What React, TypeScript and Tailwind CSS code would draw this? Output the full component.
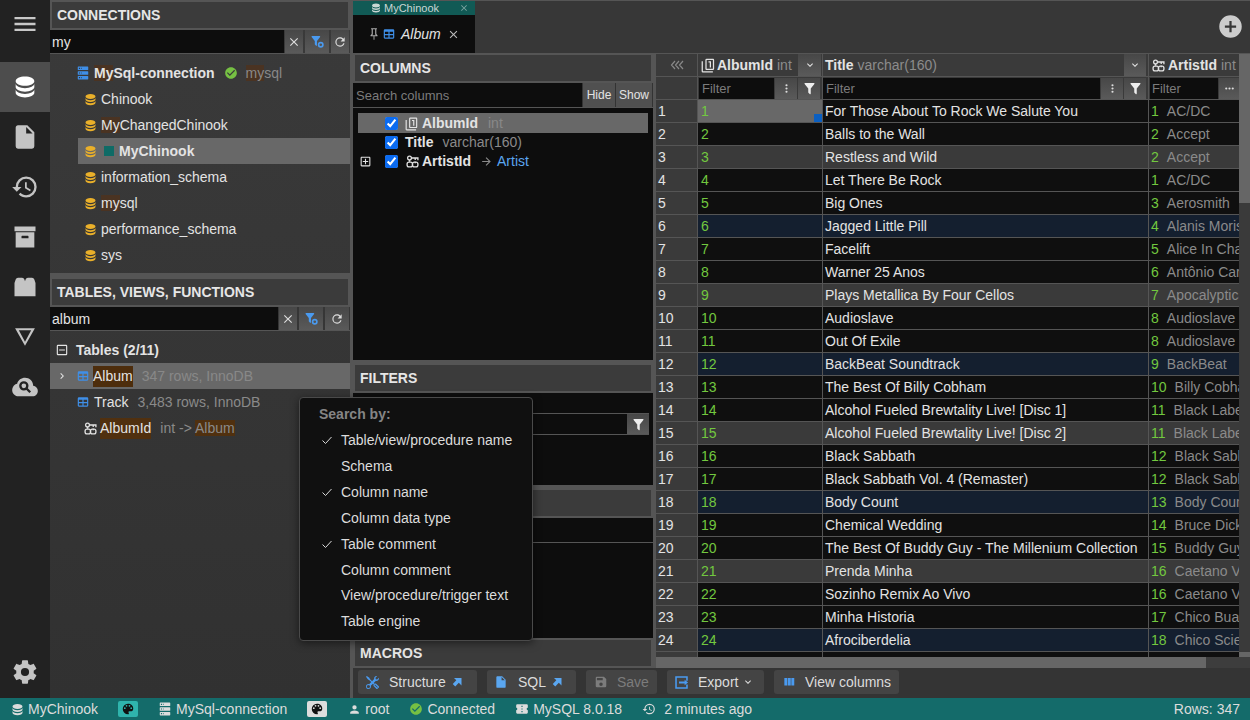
import React from 'react';
import { BsTools } from 'react-icons/bs';

const P = {
  menu: 'M3,6H21V8H3V6M3,11H21V13H3V11M3,16H21V18H3V16Z',
  database: 'M12,3C7.58,3 4,4.79 4,7C4,9.21 7.58,11 12,11C16.42,11 20,9.21 20,7C20,4.79 16.42,3 12,3M4,9V12C4,14.21 7.58,16 12,16C16.42,16 20,14.21 20,12V9C20,11.21 16.42,13 12,13C7.58,13 4,11.21 4,9M4,14V17C4,19.21 7.58,21 12,21C16.42,21 20,19.21 20,17V14C20,16.21 16.42,18 12,18C7.58,18 4,16.21 4,14Z',
  file: 'M13,9V3.5L18.5,9M6,2C4.89,2 4,2.89 4,4V20A2,2 0 0,0 6,22H18A2,2 0 0,0 20,20V8L14,2H6Z',
  history: 'M13.5,8H12V13L16.28,15.54L17,14.33L13.5,12.25V8M13,3A9,9 0 0,0 4,12H1L4.96,16.03L9,12H6A7,7 0 0,1 13,5A7,7 0 0,1 20,12A7,7 0 0,1 13,19C11.07,19 9.32,18.21 8.06,16.94L6.64,18.36C8.27,20 10.5,21 13,21A9,9 0 0,0 22,12A9,9 0 0,0 13,3',
  archive: 'M3,3H21V7H3V3M4,8H20V21H4V8M9.5,11A0.5,0.5 0 0,0 9,11.5V13H15V11.5A0.5,0.5 0 0,0 14.5,11H9.5Z',
  brick: 'M3,8.5L4,5.5Q4.5,4 6,4H9.5Q11,4 11.5,5.5L12,7L12.5,5.5Q13,4 14.5,4H18Q19.5,4 20,5.5L21,8.5V20H3Z',
  cog: 'M12,15.5A3.5,3.5 0 0,1 8.5,12A3.5,3.5 0 0,1 12,8.5A3.5,3.5 0 0,1 15.5,12A3.5,3.5 0 0,1 12,15.5M19.43,12.97C19.47,12.65 19.5,12.33 19.5,12C19.5,11.67 19.47,11.34 19.43,11L21.54,9.37C21.73,9.22 21.78,8.95 21.66,8.73L19.66,5.27C19.54,5.05 19.27,4.96 19.05,5.05L16.56,6.05C16.04,5.66 15.5,5.32 14.87,5.07L14.5,2.42C14.46,2.18 14.25,2 14,2H10C9.75,2 9.54,2.18 9.5,2.42L9.13,5.07C8.5,5.32 7.96,5.66 7.44,6.05L4.95,5.05C4.73,4.96 4.46,5.05 4.34,5.27L2.34,8.73C2.21,8.95 2.27,9.22 2.46,9.37L4.57,11C4.53,11.34 4.5,11.67 4.5,12C4.5,12.33 4.53,12.65 4.57,12.97L2.46,14.63C2.27,14.78 2.21,15.05 2.34,15.27L4.34,18.73C4.46,18.95 4.73,19.03 4.95,18.95L7.44,17.94C7.96,18.34 8.5,18.68 9.13,18.93L9.5,21.58C9.54,21.82 9.75,22 10,22H14C14.25,22 14.46,21.82 14.5,21.58L14.87,18.93C15.5,18.67 16.04,18.34 16.56,17.94L19.05,18.95C19.27,19.03 19.54,18.95 19.66,18.73L21.66,15.27C21.78,15.05 21.73,14.78 21.54,14.63L19.43,12.97Z',
  server: 'M4,1H20A1,1 0 0,1 21,2V6A1,1 0 0,1 20,7H4A1,1 0 0,1 3,6V2A1,1 0 0,1 4,1M4,9H20A1,1 0 0,1 21,10V14A1,1 0 0,1 20,15H4A1,1 0 0,1 3,14V10A1,1 0 0,1 4,9M4,17H20A1,1 0 0,1 21,18V22A1,1 0 0,1 20,23H4A1,1 0 0,1 3,22V18A1,1 0 0,1 4,17M9,5H10V3H9V5M9,13H10V11H9V13M9,21H10V19H9V21M5,3V5H7V3H5M5,11V13H7V11H5M5,19V21H7V19H5Z',
  table: 'M5,4H19A2,2 0 0,1 21,6V18A2,2 0 0,1 19,20H5A2,2 0 0,1 3,18V6A2,2 0 0,1 5,4M5,8V12H11V8H5M13,8V12H19V8H13M5,14V18H11V14H5M13,14V18H19V14H13Z',
  checkCircle: 'M12 2C6.5 2 2 6.5 2 12S6.5 22 12 22 22 17.5 22 12 17.5 2 12 2M10 17L5 12L6.41 10.59L10 14.17L17.59 6.58L19 8L10 17Z',
  filter: 'M14,12V19.88C14.04,20.18 13.94,20.5 13.71,20.71C13.32,21.1 12.69,21.1 12.3,20.71L10.29,18.7C10.06,18.47 9.96,18.16 10,17.87V12H9.97L4.21,4.62C3.87,4.19 3.95,3.56 4.38,3.22C4.57,3.08 4.78,3 5,3V3H19V3C19.22,3 19.43,3.08 19.62,3.22C20.05,3.56 20.13,4.19 19.79,4.62L14.03,12H14Z',
  close: 'M19,6.41L17.59,5L12,10.59L6.41,5L5,6.41L10.59,12L5,17.59L6.41,19L12,13.41L17.59,19L19,17.59L13.41,12L19,6.41Z',
  refresh: 'M17.65,6.35C16.2,4.9 14.21,4 12,4A8,8 0 0,0 4,12A8,8 0 0,0 12,20C15.73,20 18.84,17.45 19.73,14H17.65C16.83,16.33 14.61,18 12,18A6,6 0 0,1 6,12A6,6 0 0,1 12,6C13.66,6 15.14,6.69 16.22,7.78L13,11H20V4L17.65,6.35Z',
  chevronRight: 'M8.59,16.58L13.17,12L8.59,7.41L10,6L16,12L10,18L8.59,16.58Z',
  chevronDown: 'M7.41,8.58L12,13.17L16.59,8.58L18,10L12,16L6,10L7.41,8.58Z',
  dotsV: 'M12,16A2,2 0 0,1 14,18A2,2 0 0,1 12,20A2,2 0 0,1 10,18A2,2 0 0,1 12,16M12,10A2,2 0 0,1 14,12A2,2 0 0,1 12,14A2,2 0 0,1 10,12A2,2 0 0,1 12,10M12,4A2,2 0 0,1 14,6A2,2 0 0,1 12,8A2,2 0 0,1 10,6A2,2 0 0,1 12,4Z',
  dotsH: 'M16,12A2,2 0 0,1 18,10A2,2 0 0,1 20,12A2,2 0 0,1 18,14A2,2 0 0,1 16,12M10,12A2,2 0 0,1 12,10A2,2 0 0,1 14,12A2,2 0 0,1 12,14A2,2 0 0,1 10,12M4,12A2,2 0 0,1 6,10A2,2 0 0,1 8,12A2,2 0 0,1 6,14A2,2 0 0,1 4,12Z',
  minusBox: 'M19,19V5H5V19H19M19,3A2,2 0 0,1 21,5V19A2,2 0 0,1 19,21H5A2,2 0 0,1 3,19V5A2,2 0 0,1 5,3H19M17,11V13H7V11H17Z',
  plusBox: 'M19,19V5H5V19H19M19,3A2,2 0 0,1 21,5V19A2,2 0 0,1 19,21H5C3.89,21 3,20.1 3,19V5C3,3.89 3.89,3 5,3H19M11,7H13V11H17V13H13V17H11V13H7V11H11V7Z',
  pin: 'M16,12V4H17V2H7V4H8V12L6,14V16H11.2V22H12.8V16H18V14L16,12M8.8,14L10,12.8V4H14V12.8L15.2,14H8.8Z',
  primary: 'M14,15H16V5H12V7H14M19,17H9V3H19M19,1H9A2,2 0 0,0 7,3V17C7,18.11 7.9,19 9,19H19A2,2 0 0,0 21,17V3C21,1.89 20.1,1 19,1M3,5H1V21A2,2 0 0,0 3,23H19V21H3V5Z',
  arrowRight: 'M4,11V13H16L10.5,18.5L11.92,19.92L19.84,12L11.92,4.08L10.5,5.5L16,11H4Z',
  arrowUpRight: 'M6,4H21V19L15.6,13.6L8.5,21L3.5,16L10.6,8.6Z',
  save: 'M15,9H5V5H15M12,19A3,3 0 0,1 9,16A3,3 0 0,1 12,13A3,3 0 0,1 15,16A3,3 0 0,1 12,19M17,3H5C3.89,3 3,3.9 3,5V19A2,2 0 0,0 5,21H19A2,2 0 0,0 21,19V7L17,3Z',
  exportBox: 'M2,2H22V9H19.5V4.5H4.5V19.5H19.5V15H22V22H2ZM8,10.5H17V7.5L22.5,12L17,16.5V13.5H8Z',
  viewColumn: 'M16,5V18H21V5M4,18H9V5H4M10,18H15V5H10V18Z',
  palette: 'M17.5,12A1.5,1.5 0 0,1 16,10.5A1.5,1.5 0 0,1 17.5,9A1.5,1.5 0 0,1 19,10.5A1.5,1.5 0 0,1 17.5,12M14.5,8A1.5,1.5 0 0,1 13,6.5A1.5,1.5 0 0,1 14.5,5A1.5,1.5 0 0,1 16,6.5A1.5,1.5 0 0,1 14.5,8M9.5,8A1.5,1.5 0 0,1 8,6.5A1.5,1.5 0 0,1 9.5,5A1.5,1.5 0 0,1 11,6.5A1.5,1.5 0 0,1 9.5,8M6.5,12A1.5,1.5 0 0,1 5,10.5A1.5,1.5 0 0,1 6.5,9A1.5,1.5 0 0,1 8,10.5A1.5,1.5 0 0,1 6.5,12M12,3A9,9 0 0,0 3,12A9,9 0 0,0 12,21A1.5,1.5 0 0,0 13.5,19.5C13.5,19.11 13.35,18.76 13.11,18.5C12.88,18.23 12.73,17.88 12.73,17.5A1.5,1.5 0 0,1 14.23,16H16A5,5 0 0,0 21,11C21,6.58 16.97,3 12,3Z',
  account: 'M12,4A4,4 0 0,1 16,8A4,4 0 0,1 12,12A4,4 0 0,1 8,8A4,4 0 0,1 12,4M12,14C16.42,14 20,15.79 20,18V20H4V18C4,15.79 7.58,14 12,14Z',
  ticket: 'M13,8.5H11V6.5H13V8.5M13,13H11V11H13V13M13,17.5H11V15.5H13V17.5M22,10V6C22,4.89 21.1,4 20,4H4A2,2 0 0,0 2,6V10C3.11,10 4,10.9 4,12A2,2 0 0,1 2,14V18A2,2 0 0,0 4,20H20A2,2 0 0,0 22,18V14A2,2 0 0,1 20,12A2,2 0 0,1 22,10Z',
  plusCircle: 'M17,13H13V17H11V13H7V11H11V7H13V11H17M12,2A10,10 0 0,0 2,12A10,10 0 0,0 12,22A10,10 0 0,0 22,12A10,10 0 0,0 12,2Z',
  cloud: 'M6.5,20C4.98,20 3.68,19.48 2.61,18.43C1.54,17.38 1,16.1 1,14.58C1,13.28 1.39,12.12 2.17,11.1C2.95,10.08 3.98,9.43 5.25,9.15C5.67,7.62 6.5,6.38 7.75,5.43C9,4.48 10.42,4 12,4C13.95,4 15.6,4.68 16.96,6.04C18.32,7.4 19,9.05 19,11C20.15,11.13 21.1,11.63 21.86,12.5C22.62,13.35 23,14.35 23,15.5C23,16.75 22.56,17.81 21.69,18.69C20.81,19.56 19.75,20 18.5,20Z',
  triangle: 'M12,19.5L3.5,4.5H20.5ZM12,16L17.3,6.2H6.7Z',
};

function Mdi({ d, className }: { d: string; className?: string }) {
  return (
    <svg viewBox="0 0 24 24" fill="currentColor" className={'shrink-0 ' + (className ?? '')}>
      <path d={d} fillRule="evenodd" />
    </svg>
  );
}

// key on top, chain link underneath
function KeyLink({ className }: { className?: string }) {
  return (
    <svg viewBox="0 0 24 24" fill="none" stroke="currentColor" strokeWidth="2.4" className={'shrink-0 ' + (className ?? '')}>
      <circle cx="6.5" cy="5.5" r="3.5" />
      <path d="M10 5.5H22V9.5M17 5.5V9" />
      <path d="M6.5 9V12.5M17 12.5V15" />
      <rect x="2" y="13" width="10" height="9" rx="3.5" />
      <rect x="12" y="13" width="10" height="9" rx="3.5" />
    </svg>
  );
}

function FilterCog({ className }: { className?: string }) {
  return (
    <svg viewBox="0 0 24 24" className={'shrink-0 ' + (className ?? '')}>
      <path d={P.filter} fill="currentColor" transform="translate(-3 -1)" />
      <circle cx="18" cy="18" r="4" fill="none" stroke="currentColor" strokeWidth="3" />
    </svg>
  );
}

function PanelHeader({ children }: { children?: React.ReactNode }) {
  return (
    <div className="h-[30px] shrink-0 border-2 border-[#555] bg-[#3b3b3b] flex items-center pl-[5px] text-[14px] font-bold text-[#e6e6e6]">
      {children}
    </div>
  );
}

function IconBtn({ w, children, ml }: { w: string; ml?: string; children: React.ReactNode }) {
  return (
    <div className={`${w} ${ml ?? ''} h-full shrink-0 flex items-center justify-center bg-linear-to-b from-[#474747] to-[#5a5a5a] text-[#ddd]`}>
      {children}
    </div>
  );
}

function Hl({ children, dim }: { children: React.ReactNode; dim?: boolean }) {
  return <span className={dim ? 'bg-[#4a3322]' : 'bg-[#50300f]'}>{children}</span>;
}

function DbRow({ children, selected }: { children: React.ReactNode; selected?: boolean }) {
  return (
    <div className={`h-[26px] ml-[28px] pl-[5px] flex items-center ${selected ? 'bg-[#686868]' : ''}`}>
      <Mdi d={P.database} className="w-[15px] h-[15px] text-[#eab02a] mr-[3px]" />
      {children}
    </div>
  );
}

function SideIcon({ d, active }: { d: string; active?: boolean }) {
  return (
    <div className={`h-[50px] flex items-center justify-center ${active ? 'bg-[#4d4d4d] text-white' : 'text-[#c4c4c4]'}`}>
      <Mdi d={d} className="w-[28px] h-[28px]" />
    </div>
  );
}

function ToolBtn({ children, dim, ml, w }: { children: React.ReactNode; dim?: boolean; ml: string; w: string }) {
  return (
    <div className={`${ml} ${w} h-[24px] shrink-0 rounded-[3px] bg-[#444] flex items-center ${dim ? 'text-[#7c7c7c]' : 'text-[#dcdcdc]'}`}>
      {children}
    </div>
  );
}

const titles = [
  'For Those About To Rock We Salute You', 'Balls to the Wall', 'Restless and Wild', 'Let There Be Rock', 'Big Ones',
  'Jagged Little Pill', 'Facelift', 'Warner 25 Anos', 'Plays Metallica By Four Cellos', 'Audioslave', 'Out Of Exile',
  'BackBeat Soundtrack', 'The Best Of Billy Cobham', 'Alcohol Fueled Brewtality Live! [Disc 1]',
  'Alcohol Fueled Brewtality Live! [Disc 2]', 'Black Sabbath', 'Black Sabbath Vol. 4 (Remaster)', 'Body Count',
  'Chemical Wedding', 'The Best Of Buddy Guy - The Millenium Collection', 'Prenda Minha', 'Sozinho Remix Ao Vivo',
  'Minha Historia', 'Afrociberdelia',
];

const artists: [number, string][] = [
  [1, 'AC/DC'], [2, 'Accept'], [2, 'Accept'], [1, 'AC/DC'], [3, 'Aerosmith'], [4, 'Alanis Morissette'],
  [5, 'Alice In Chains'], [6, 'Antônio Carlos Jobim'], [7, 'Apocalyptica'], [8, 'Audioslave'], [8, 'Audioslave'],
  [9, 'BackBeat'], [10, 'Billy Cobham'], [11, 'Black Label Society'], [11, 'Black Label Society'], [12, 'Black Sabbath'],
  [12, 'Black Sabbath'], [13, 'Body Count'], [14, 'Bruce Dickinson'], [15, 'Buddy Guy'], [16, 'Caetano Veloso'],
  [16, 'Caetano Veloso'], [17, 'Chico Buarque'], [18, 'Chico Science & Nação Zumbi'],
];

function rowBg(n: number) {
  if (n % 6 === 3) return 'bg-[#3a3a3a]';
  if (n % 6 === 0) return 'bg-[#141f2f]';
  return 'bg-[#0f0f0f]';
}

const searchBy: [string, boolean, string][] = [
  ['Table/view/procedure name', true, 'h-[26px]'], ['Schema', false, 'h-[26px]'], ['Column name', true, 'h-[26px]'],
  ['Column data type', false, 'h-[26px]'], ['Table comment', true, 'h-[26px]'], ['Column comment', false, 'h-[26px]'],
  ['View/procedure/trigger text', false, 'h-[25px]'], ['Table engine', false, 'h-[26px]'],
];

function LeftPanel() {
  return (
    <div className="w-[300px] shrink-0 flex flex-col bg-linear-to-b from-[#3a3a3a] to-[#313131] text-[#e3e3e3]">
      <PanelHeader>CONNECTIONS</PanelHeader>
      <div className="h-[24px] shrink-0 flex items-stretch gap-[1px] pr-[1px] border-b border-[#555]">
        <div className="w-[234px] bg-[#0d0d0d] pl-[2px] pt-[2px] flex items-center">my</div>
        <IconBtn w="w-[18px]"><Mdi d={P.close} className="w-[14px] h-[14px]" /></IconBtn>
        <IconBtn w="w-[24px]" ml="ml-[1px]"><FilterCog className="w-[13px] h-[13px] text-[#4a9aef]" /></IconBtn>
        <IconBtn w="w-[18px]" ml="ml-[1px]"><Mdi d={P.refresh} className="w-[14px] h-[14px]" /></IconBtn>
      </div>
      <div className="h-[219px] shrink-0 pt-[6px]">
        <div className="h-[26px] pl-[26px] flex items-center">
          <Mdi d={P.server} className="w-[14px] h-[14px] text-[#3f8fe8] mr-[4px]" />
          <span className="font-bold"><Hl dim>My</Hl>Sql-connection</span>
          <Mdi d={P.checkCircle} className="w-[14px] h-[14px] text-[#76c043] ml-[9px]" />
          <span className="ml-[8px] text-[#888]"><Hl dim>my</Hl>sql</span>
        </div>
        <DbRow>Chinook</DbRow>
        <DbRow><span><Hl dim>My</Hl>ChangedChinook</span></DbRow>
        <DbRow selected>
          <span className="w-[10px] h-[10px] bg-[#0f6b66] mr-[5px] ml-[3px]" />
          <span className="font-bold">MyChinook</span>
        </DbRow>
        <DbRow>information_schema</DbRow>
        <DbRow><span><Hl dim>my</Hl>sql</span></DbRow>
        <DbRow>performance_schema</DbRow>
        <DbRow>sys</DbRow>
      </div>
      <div className="h-[4px] shrink-0 bg-[#555]" />
      <PanelHeader>TABLES, VIEWS, FUNCTIONS</PanelHeader>
      <div className="h-[24px] shrink-0 flex items-stretch gap-[1px] pr-[1px] border-b border-[#555]">
        <div className="w-[228px] bg-[#0d0d0d] pl-[2px] pt-[2px] flex items-center">album</div>
        <IconBtn w="w-[18px]"><Mdi d={P.close} className="w-[14px] h-[14px]" /></IconBtn>
        <IconBtn w="w-[24px]" ml="ml-[1px]"><FilterCog className="w-[13px] h-[13px] text-[#4a9aef]" /></IconBtn>
        <IconBtn w="w-[24px]" ml="ml-[1px]"><Mdi d={P.refresh} className="w-[14px] h-[14px]" /></IconBtn>
      </div>
      <div className="pt-[6px]">
        <div className="h-[26px] pl-[5px] flex items-center font-bold">
          <Mdi d={P.minusBox} className="w-[14px] h-[14px] mr-[7px]" />
          Tables (2/11)
        </div>
        <div className="h-[26px] pl-[6px] flex items-center bg-[#686868]">
          <Mdi d={P.chevronRight} className="w-[12px] h-[12px] mr-[8px]" />
          <Mdi d={P.table} className="w-[14px] h-[14px] text-[#3f8fe8] mr-[3px]" />
          <span className="bg-[#4d2d0c]">Album</span>
          <span className="ml-[9px] text-[#888]">347 rows, InnoDB</span>
        </div>
        <div className="h-[26px] pl-[26px] flex items-center">
          <Mdi d={P.table} className="w-[14px] h-[14px] text-[#3f8fe8] mr-[4px]" />
          Track
          <span className="ml-[9px] text-[#8a8a8a]">3,483 rows, InnoDB</span>
        </div>
        <div className="h-[26px] pl-[34px] flex items-center">
          <KeyLink className="w-[13px] h-[13px] mr-[3px]" />
          <Hl>AlbumId</Hl>
          <span className="ml-[9px] text-[#8a8a8a]">int -&gt; <Hl>Album</Hl></span>
        </div>
      </div>
    </div>
  );
}

function MiddlePanel() {
  return (
    <div className="w-[300px] shrink-0 flex flex-col bg-[#555] text-[#e3e3e3]">
      <PanelHeader>COLUMNS</PanelHeader>
      <div className="h-[24px] shrink-0 flex gap-[1px] pr-[1px] bg-[#333]">
        <div className="w-[229px] bg-[#0d0d0d] pl-[3px] pt-[1px] flex items-center text-[13px] text-[#7c7c7c]">Search columns</div>
        <div className="w-[32px] bg-[#505050] flex items-center justify-center text-[12px]">Hide</div>
        <div className="w-[36px] bg-[#505050] flex items-center justify-center text-[12px]">Show</div>
      </div>
      <div className="h-[252px] shrink-0 mt-[1px] bg-[#0d0d0d] pt-[5px] pl-[5px] pr-[5px]">
        <div className="h-[20px] pt-[1px] bg-[#686868] flex items-center pl-[27px]">
          <input type="checkbox" readOnly checked className="w-[13px] h-[13px] accent-[#0b6bf0] mr-[7px]" />
          <Mdi d={P.primary} className="w-[14px] h-[14px] mr-[3px]" />
          <span className="font-bold">AlbumId</span>
          <span className="ml-[10px] text-[#888]">int</span>
        </div>
        <div className="h-[19px] flex items-center pl-[27px]">
          <input type="checkbox" readOnly checked className="w-[13px] h-[13px] accent-[#0b6bf0] mr-[7px]" />
          <span className="font-bold">Title</span>
          <span className="ml-[9px] text-[#8a8a8a]">varchar(160)</span>
        </div>
        <div className="h-[19px] flex items-center pl-[1px]">
          <Mdi d={P.plusBox} className="w-[13px] h-[13px] mr-[13px]" />
          <input type="checkbox" readOnly checked className="w-[13px] h-[13px] accent-[#0b6bf0] mr-[8px]" />
          <KeyLink className="w-[13px] h-[13px] mr-[3px]" />
          <span className="font-bold">ArtistId</span>
          <Mdi d={P.arrowRight} className="w-[13px] h-[13px] ml-[9px] mr-[4px] text-[#8a8a8a]" />
          <span className="text-[#5aa6f0]">Artist</span>
        </div>
      </div>
      <div className="h-[3px] shrink-0" />
      <PanelHeader>FILTERS</PanelHeader>
      <div className="h-[92px] shrink-0 bg-[#0d0d0d] pt-[20px] pl-[2px] pr-[4px]">
        <div className="h-[22px] flex border-t border-b border-[#555]">
          <div className="flex-1" />
          <IconBtn w="w-[22px]"><Mdi d={P.filter} className="w-[15px] h-[15px] text-[#eee]" /></IconBtn>
        </div>
      </div>
      <div className="h-[3px] shrink-0" />
      <PanelHeader />
      <div className="h-[120px] shrink-0 bg-[#0d0d0d]">
        <div className="h-[25px] border-b border-[#555]" />
      </div>
      <PanelHeader>MACROS</PanelHeader>
    </div>
  );
}

function Grid() {
  return (
    <div className="w-[594px] shrink-0 flex flex-col bg-[#3a3a3a] text-[#e3e3e3] border-t border-[#555]">
      <div className="h-[603px] flex overflow-hidden">
        <div className="w-[583px] shrink-0">
          <div className="grid grid-cols-[42px_125px_326px_90px] h-[23px] border-b border-[#555]">
            <div className="border-r border-[#555] flex items-center justify-center text-[#888]">
              <svg viewBox="0 0 14 12" className="w-[14px] h-[12px]" fill="none" stroke="currentColor" strokeWidth="1.2">
                <path d="M5 2L1.5 6L5 10M9 2L5.5 6L9 10M13 2L9.5 6L13 10" />
              </svg>
            </div>
            <div className="border-r border-[#555] flex items-center pl-[3px]">
              <Mdi d={P.primary} className="w-[15px] h-[15px] mr-[1px]" />
              <span className="font-bold">AlbumId</span>
              <span className="ml-[4px] text-[#8c8c8c]">int</span>
              <div className="ml-auto mr-[1px] h-[22px] w-[23px] flex items-center justify-center bg-linear-to-b from-[#474747] to-[#5a5a5a]">
                <Mdi d={P.chevronDown} className="w-[12px] h-[12px]" />
              </div>
            </div>
            <div className="border-r border-[#555] flex items-center pl-[2px]">
              <span className="font-bold">Title</span>
              <span className="ml-[4px] text-[#8c8c8c]">varchar(160)</span>
              <div className="ml-auto mr-[2px] h-[22px] w-[22px] flex items-center justify-center bg-linear-to-b from-[#474747] to-[#5a5a5a]">
                <Mdi d={P.chevronDown} className="w-[12px] h-[12px]" />
              </div>
            </div>
            <div className="flex items-center pl-[3px] whitespace-nowrap overflow-hidden">
              <KeyLink className="w-[13px] h-[13px] mr-[3px]" />
              <span className="font-bold">ArtistId</span>
              <span className="ml-[4px] text-[#8c8c8c]">int</span>
            </div>
          </div>
          <div className="grid grid-cols-[42px_125px_326px_90px] h-[23px] border-b border-[#555]">
            <div className="border-r border-[#555]" />
            <div className="border-r border-[#555] flex items-stretch pl-[1px] py-[1px] pr-[1px] gap-[1px]">
              <div className="w-[75px] bg-[#0d0d0d] pl-[3px] pt-[1px] flex items-center text-[13px] text-[#7c7c7c]">Filter</div>
              <IconBtn w="w-[22px]"><Mdi d={P.dotsV} className="w-[13px] h-[13px]" /></IconBtn>
              <IconBtn w="w-[22px]"><Mdi d={P.filter} className="w-[15px] h-[15px] text-[#eee]" /></IconBtn>
            </div>
            <div className="border-r border-[#555] flex items-stretch py-[1px] pr-[1px] gap-[1px]">
              <div className="w-[277px] bg-[#0d0d0d] pl-[3px] pt-[1px] flex items-center text-[13px] text-[#7c7c7c]">Filter</div>
              <IconBtn w="w-[22px]"><Mdi d={P.dotsV} className="w-[13px] h-[13px]" /></IconBtn>
              <IconBtn w="w-[22px]"><Mdi d={P.filter} className="w-[15px] h-[15px] text-[#eee]" /></IconBtn>
            </div>
            <div className="flex items-stretch py-[1px] pl-[1px] gap-[1px]">
              <div className="w-[68px] bg-[#0d0d0d] pl-[2px] pt-[1px] flex items-center text-[13px] text-[#7c7c7c]">Filter</div>
              <IconBtn w="w-[20px]"><Mdi d={P.dotsH} className="w-[13px] h-[13px]" /></IconBtn>
            </div>
          </div>
          {titles.map((title, i) => {
            const n = i + 1;
            const [aid, aname] = artists[i];
            return (
              <div key={n} className={`grid grid-cols-[42px_125px_326px_90px] h-[23px] border-b border-[#555] ${rowBg(n)}`}>
                <div className="bg-[#3a3a3a] border-r border-[#555] pl-[2px] flex items-center">{n}</div>
                <div className={`relative border-r border-[#555] pl-[3px] flex items-center text-[#72c83f] ${n === 1 ? 'bg-[#686868]' : ''}`}>
                  {n}
                  {n === 1 && <span className="absolute right-0 bottom-0 w-[8px] h-[8px] bg-[#0b5fc0]" />}
                </div>
                <div className="border-r border-[#555] pl-[2px] flex items-center whitespace-nowrap overflow-hidden">{title}</div>
                <div className="pl-[2px] flex items-center whitespace-nowrap overflow-hidden">
                  <span className="text-[#72c83f] mr-[8px]">{aid}</span>
                  <span className="text-[#8a8a8a]">{aname}</span>
                </div>
              </div>
            );
          })}
          <div className="grid grid-cols-[42px_125px_326px_90px] h-[23px] bg-[#0f0f0f]">
            <div className="bg-[#3a3a3a] border-r border-[#555]" />
            <div className="border-r border-[#555]" />
            <div className="border-r border-[#555]" />
            <div />
          </div>
        </div>
        <div className="w-[11px] shrink-0 flex flex-col bg-[#3a3a3a]">
          <div className="h-[149px] bg-[#666]" />
          <div className="flex-1" />
          <div className="h-[5px] bg-[#666]" />
        </div>
      </div>
      <div className="h-[11px] shrink-0 bg-[#3d3d3d]">
        <div className="w-[550px] h-full bg-[#666]" />
      </div>
    </div>
  );
}

export default function App() {
  return (
    <div className="relative w-[1250px] h-[720px] overflow-hidden flex flex-col bg-[#343434] text-[14px] font-['Liberation_Sans',Arial,sans-serif]">
      <div className="flex-1 min-h-0 flex">
        <div className="w-[50px] shrink-0 bg-[#222] flex flex-col">
          <div className="h-[62px] pb-[14px] flex items-center justify-center text-[#c8c8c8]">
            <Mdi d={P.menu} className="w-[28px] h-[28px]" />
          </div>
          <SideIcon d={P.database} active />
          <SideIcon d={P.file} />
          <SideIcon d={P.history} />
          <SideIcon d={P.archive} />
          <SideIcon d={P.brick} />
          <SideIcon d={P.triangle} />
          <div className="h-[50px] flex items-center justify-center text-[#c4c4c4] relative">
            <Mdi d={P.cloud} className="w-[28px] h-[28px]" />
            <svg viewBox="0 0 24 24" className="absolute w-[14px] h-[14px] left-[18px] top-[18px]" fill="none" stroke="#222" strokeWidth="4">
              <circle cx="10" cy="10" r="6" />
              <path d="M14.5 14.5L21 21" />
            </svg>
          </div>
          <div className="mt-auto h-[52px] flex items-center justify-center text-[#c4c4c4]">
            <Mdi d={P.cog} className="w-[28px] h-[28px]" />
          </div>
        </div>

        <LeftPanel />
        <div className="w-[3px] shrink-0 bg-[#555]" />

        <div className="flex-1 min-w-0 flex flex-col">
          <div className="h-[53px] shrink-0 flex border-t border-[#555] bg-[#373737]">
            <div className="w-[122px] shrink-0 flex flex-col bg-[#0d0d0d] text-[#e3e3e3]">
              <div className="h-[14px] bg-[#115a55] flex items-center pl-[17px] text-[11px] text-[#c9d6d4]">
                <Mdi d={P.database} className="w-[12px] h-[12px] mr-[2px]" />
                MyChinook
                <Mdi d={P.close} className="w-[10px] h-[10px] ml-[20px] text-[#7fa5a2]" />
              </div>
              <div className="flex-1 flex items-center pl-[14px]">
                <Mdi d={P.pin} className="w-[14px] h-[14px] text-[#aaa] mr-[1px]" />
                <Mdi d={P.table} className="w-[14px] h-[14px] text-[#3f8fe8] mr-[5px]" />
                <span className="italic">Album</span>
                <Mdi d={P.close} className="w-[13px] h-[13px] ml-[6px] text-[#bbb]" />
              </div>
            </div>
            <div className="flex-1 flex items-center justify-end pr-[6px] pb-[2px]">
              <Mdi d={P.plusCircle} className="w-[27px] h-[27px] text-[#ccc]" />
            </div>
          </div>
          <div className="h-[615px] shrink-0 flex">
            <MiddlePanel />
            <div className="w-[3px] shrink-0 bg-[#555]" />
            <Grid />
          </div>
          <div className="flex-1 min-h-0 flex items-start pt-[2px] bg-[#343434]">
            <ToolBtn ml="ml-[5px]" w="w-[119px]">
              <BsTools className="w-[13px] h-[13px] ml-[8px] mr-[10px] text-[#4a9aef] shrink-0" />
              Structure
              <Mdi d={P.arrowUpRight} className="w-[12px] h-[12px] ml-[5px] text-[#5aa6f0]" />
            </ToolBtn>
            <ToolBtn ml="ml-[10px]" w="w-[89px]">
              <Mdi d={P.file} className="w-[14px] h-[14px] ml-[7px] mr-[10px] text-[#5aa6f0]" />
              SQL
              <Mdi d={P.arrowUpRight} className="w-[12px] h-[12px] ml-[5px] text-[#5aa6f0]" />
            </ToolBtn>
            <ToolBtn ml="ml-[10px]" w="w-[71px]" dim>
              <Mdi d={P.save} className="w-[14px] h-[14px] ml-[8px] mr-[9px]" />
              Save
            </ToolBtn>
            <ToolBtn ml="ml-[10px]" w="w-[97px]">
              <Mdi d={P.exportBox} className="w-[15px] h-[15px] ml-[7px] mr-[9px] text-[#4a9aef]" />
              Export
              <Mdi d={P.chevronDown} className="w-[12px] h-[12px] ml-[4px]" />
            </ToolBtn>
            <ToolBtn ml="ml-[10px]" w="w-[125px]">
              <Mdi d={P.viewColumn} className="w-[14px] h-[14px] ml-[8px] mr-[9px] text-[#4a9aef]" />
              View columns
            </ToolBtn>
          </div>
        </div>
      </div>

      <div className="h-[22px] shrink-0 bg-[#146b6a] flex items-center text-[#dcdcdc]">
        <Mdi d={P.database} className="w-[15px] h-[15px] ml-[10px] mr-[3px]" />
        MyChinook
        <span className="ml-[20px] w-[20px] h-[16px] rounded-[2px] bg-[#2fb4ad] flex items-center justify-center">
          <Mdi d={P.palette} className="w-[14px] h-[14px] text-[#111]" />
        </span>
        <Mdi d={P.server} className="w-[14px] h-[14px] ml-[20px] mr-[4px]" />
        MySql-connection
        <span className="ml-[20px] w-[20px] h-[16px] rounded-[2px] bg-[#ddd] flex items-center justify-center">
          <Mdi d={P.palette} className="w-[14px] h-[14px] text-[#111]" />
        </span>
        <Mdi d={P.account} className="w-[13px] h-[13px] ml-[21px] mr-[4px]" />
        root
        <Mdi d={P.checkCircle} className="w-[14px] h-[14px] ml-[20px] mr-[4px] text-[#76c043]" />
        Connected
        <Mdi d={P.ticket} className="w-[14px] h-[14px] ml-[20px] mr-[4px]" />
        MySQL 8.0.18
        <Mdi d={P.history} className="w-[14px] h-[14px] ml-[20px] mr-[8px]" />
        2 minutes ago
        <span className="ml-auto mr-[10px]">Rows: 347</span>
      </div>

      <div className="absolute left-[299px] top-[397px] w-[234px] h-[244px] rounded-[4px] border border-[#4a4a4a] bg-[#101010] text-[#dcdcdc] shadow-[0_2px_8px_rgba(0,0,0,0.5)] pt-[3px]">
        <div className="h-[26px] pl-[19px] flex items-center font-bold text-[#858585]">Search by:</div>
        {searchBy.map(([label, on, h]) => (
          <div key={label} className={`${h} flex items-center`}>
            <span className="w-[41px] pl-[21px] shrink-0">
              {on && (
                <svg viewBox="0 0 24 24" className="w-[12px] h-[12px]" fill="none" stroke="currentColor" strokeWidth="2">
                  <path d="M3 13L9 19L21 6" />
                </svg>
              )}
            </span>
            {label}
          </div>
        ))}
      </div>
    </div>
  );
}
